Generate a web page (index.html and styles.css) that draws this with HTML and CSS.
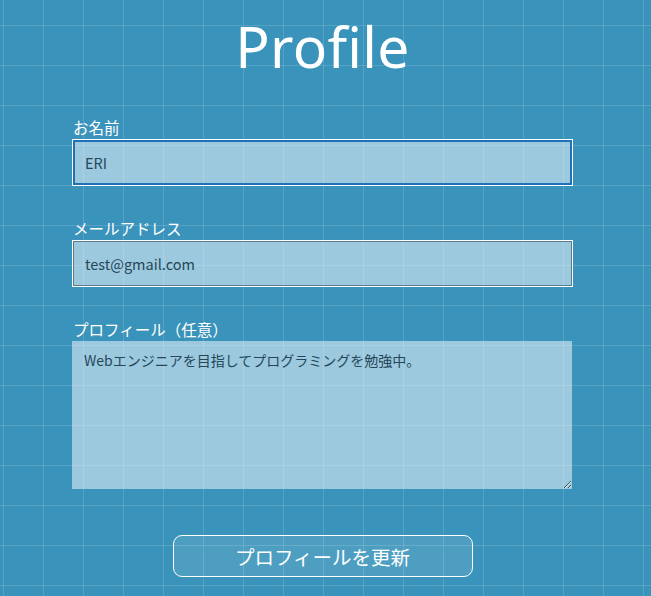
FILE: index.html
```html
<!DOCTYPE html>
<html lang="ja">
<head>
<meta charset="utf-8">
<title>Profile</title>
<link rel="stylesheet" href="styles.css">
</head>
<body>
<main class="page">
  <h1 class="title">Profile</h1>
  <form class="form">
    <div class="field">
      <label class="label" for="name">お名前</label>
      <input class="input is-focused" id="name" type="text" value="ERI">
    </div>
    <div class="field">
      <label class="label" for="email">メールアドレス</label>
      <input class="input" id="email" type="email" value="test@gmail.com">
    </div>
    <div class="field">
      <label class="label" for="bio">プロフィール（任意）</label>
      <textarea class="textarea" id="bio">Webエンジニアを目指してプログラミングを勉強中。</textarea>
    </div>
    <div class="actions">
      <button class="button" type="button">プロフィールを更新</button>
    </div>
  </form>
</main>
</body>
</html>
```

FILE: styles.css
```css
html, body {
  margin: 0;
  height: 100%;
}

body {
  background-color: #3993ba;
  background-image:
    linear-gradient(to right, rgba(255, 255, 255, 0.14) 1px, transparent 1px),
    linear-gradient(to bottom, rgba(255, 255, 255, 0.14) 1px, transparent 1px);
  background-size: 40px 40px;
  background-position: 3px 25px;
  font-family: "Noto Sans CJK JP", "Noto Sans", sans-serif;
  color: #fff;
  overflow: hidden;
}

.page {
  width: 645px;
  display: flex;
  flex-direction: column;
  align-items: center;
}

.title {
  margin: 8px 0 0;
  font-family: "Noto Sans", "Noto Sans CJK JP", sans-serif;
  font-size: 57px;
  font-weight: 400;
  line-height: 76px;
  letter-spacing: 0.3px;
}

.form {
  width: 501px;
  margin-top: 34px;
  display: flex;
  flex-direction: column;
}

.field {
  display: flex;
  flex-direction: column;
  margin-bottom: 33px;
}

.label {
  font-size: 15.5px;
  line-height: 19px;
  margin-bottom: 2px;
  padding-left: 1px;
}

.input {
  box-sizing: border-box;
  height: 47px;
  width: 501px;
  margin: 0;
  padding: 0 12px;
  border: 1px solid #fff;
  box-shadow: inset 0 0 0 1px #5b7c8b;
  background: rgba(255, 255, 255, 0.5);
  color: #24475a;
  font-family: "Noto Sans CJK JP", "Noto Sans", sans-serif;
  font-size: 14.5px;
  outline: none;
}

.input.is-focused {
  box-shadow: inset 0 0 0 2px #1f72b8;
}

.textarea {
  box-sizing: border-box;
  width: 500px;
  height: 148px;
  margin: 0;
  padding: 9px 12px;
  border: none;
  background: rgba(255, 255, 255, 0.5);
  color: #24475a;
  font-family: "Noto Sans CJK JP", "Noto Sans", sans-serif;
  font-size: 14px;
  line-height: 20px;
  outline: none;
}

.actions {
  display: flex;
  justify-content: center;
  margin-top: 13px;
}

.button {
  width: 300px;
  height: 42px;
  border: 1px solid #fff;
  border-radius: 9px;
  background: rgba(255, 255, 255, 0.1);
  color: #fff;
  font-family: "Noto Sans CJK JP", "Noto Sans", sans-serif;
  font-size: 19.5px;
  cursor: pointer;
}
```
